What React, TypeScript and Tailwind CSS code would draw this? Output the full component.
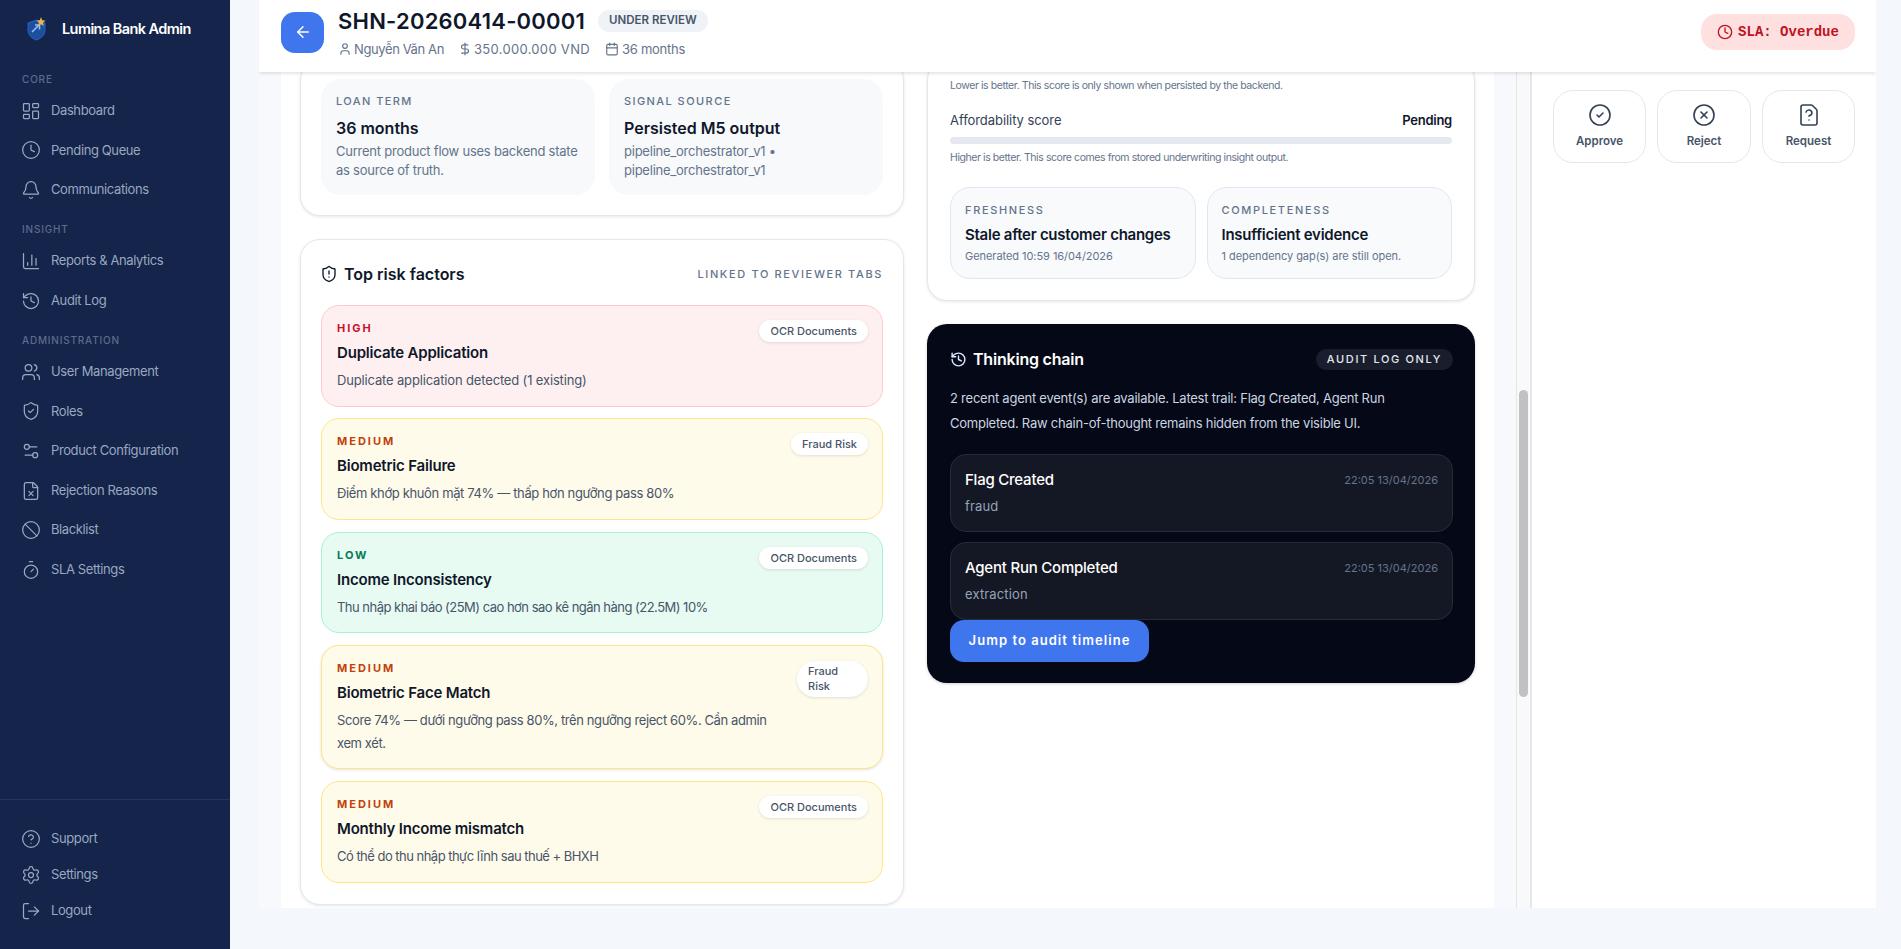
import {
  ArrowLeft, Ban, Bell, Calendar, ChartColumn, CircleCheck, CircleHelp, CircleX, Clock, DollarSign,
  FileQuestion, FileX, History, LayoutDashboard, LogOut, Settings, Settings2, ShieldAlert, ShieldCheck,
  Timer, User, Users,
} from "lucide-react";

const font = { fontFamily: "Inter, 'Noto Sans', sans-serif" };

const coreItems = [
  { label: "Dashboard", icon: LayoutDashboard },
  { label: "Pending Queue", icon: Clock },
  { label: "Communications", icon: Bell },
];
const insightItems = [
  { label: "Reports & Analytics", icon: ChartColumn },
  { label: "Audit Log", icon: History },
];
const adminItems = [
  { label: "User Management", icon: Users },
  { label: "Roles", icon: ShieldCheck },
  { label: "Product Configuration", icon: Settings2 },
  { label: "Rejection Reasons", icon: FileX },
  { label: "Blacklist", icon: Ban },
  { label: "SLA Settings", icon: Timer },
];
const footerItems = [
  { label: "Support", icon: CircleHelp },
  { label: "Settings", icon: Settings },
  { label: "Logout", icon: LogOut },
];

const riskStyles = {
  HIGH: "bg-[#fef0f0] border-[#fecaca]",
  MEDIUM: "bg-[#fffbea] border-[#fde68a]",
  LOW: "bg-[#e8fbf2] border-[#a7f3d0]",
};
const riskText = {
  HIGH: "text-[#c8102e]",
  MEDIUM: "text-[#c2410c]",
  LOW: "text-[#047857]",
};

type Risk = { level: "HIGH" | "MEDIUM" | "LOW"; title: string; desc: string; tab: string; track: string; narrow?: boolean };

const risks: Risk[] = [
  { level: "HIGH", title: "Duplicate Application", desc: "Duplicate application detected (1 existing)", tab: "OCR Documents", track: "tracking-[-0.012em]" },
  { level: "MEDIUM", title: "Biometric Failure", desc: "Điểm khớp khuôn mặt 74% — thấp hơn ngưỡng pass 80%", tab: "Fraud Risk", track: "tracking-[-0.028em]" },
  { level: "LOW", title: "Income Inconsistency", desc: "Thu nhập khai báo (25M) cao hơn sao kê ngân hàng (22.5M) 10%", tab: "OCR Documents", track: "tracking-[-0.04em]" },
  { level: "MEDIUM", title: "Biometric Face Match", desc: "Score 74% — dưới ngưỡng pass 80%, trên ngưỡng reject 60%. Cần admin xem xét.", tab: "Fraud Risk", track: "tracking-[-0.03em]", narrow: true },
  { level: "MEDIUM", title: "Monthly Income mismatch", desc: "Có thể do thu nhập thực lĩnh sau thuế + BHXH", tab: "OCR Documents", track: "tracking-[-0.04em]" },
];

function NavGroup({ title, items }: { title: string; items: typeof coreItems }) {
  return (
    <div>
      <p className="pl-[22px] text-[10px] leading-[14px] tracking-[0.08em] text-[#5d6c8e] font-medium">{title}</p>
      <div className="mt-[5px]">
        {items.map((item) => (
          <div key={item.label} className="h-[39.6px] flex items-center pl-[21px] gap-[10px] text-[#9aa8c0] text-[13px] tracking-[-0.03em]">
            <item.icon className="w-[20px] h-[20px]" strokeWidth={1.5} />
            <span>{item.label}</span>
          </div>
        ))}
      </div>
    </div>
  );
}

function Sidebar() {
  return (
    <aside className="w-[230px] shrink-0 h-full bg-[#14244a] flex flex-col">
      <div className="h-[58px] flex items-center pl-[27px] gap-[16px]">
        <svg width="19" height="24" viewBox="0 0 19 24">
          <path d="M9.5 3 L18 6 V13 C18 18 14 21.5 9.5 23 C5 21.5 1 18 1 13 V6 Z" fill="#1d4f9c" stroke="#2563c9" strokeWidth="1" />
          <path d="M5 15 L12 8 M8 8 h4.5 v4.5" stroke="#8fc1f5" strokeWidth="1.6" fill="none" />
          <path d="M14 0 L15.2 3.2 L18.5 3.5 L16 5.7 L16.8 9 L14 7.2 L11.2 9 L12 5.7 L9.5 3.5 L12.8 3.2 Z" fill="#e8b64c" />
        </svg>
        <span className="text-white text-[14.5px] font-semibold tracking-[-0.04em]">Lumina Bank Admin</span>
      </div>
      <div className="mt-[14px] flex flex-col gap-[12.5px]">
        <NavGroup title="CORE" items={coreItems} />
        <NavGroup title="INSIGHT" items={insightItems} />
        <NavGroup title="ADMINISTRATION" items={adminItems} />
      </div>
      <div className="mt-auto border-t border-[#24365f] pt-[21px] pb-[20px]">
        {footerItems.map((item) => (
          <div key={item.label} className="h-[36px] flex items-center pl-[21px] gap-[10px] text-[#9aa8c0] text-[13px] tracking-[-0.03em]">
            <item.icon className="w-[20px] h-[20px]" strokeWidth={1.5} />
            <span>{item.label}</span>
          </div>
        ))}
      </div>
    </aside>
  );
}

function Header() {
  return (
    <header className="relative z-10 h-[72px] shrink-0 bg-white shadow-[0_1px_4px_rgba(15,23,42,0.16)] flex items-center justify-between pl-[22px] pr-[21px] pb-[8px]">
      <div className="flex items-center gap-[14px]">
        <button className="w-[43px] h-[41px] rounded-[14px] bg-[#3f76ee] flex items-center justify-center text-white">
          <ArrowLeft className="w-[18px] h-[18px]" />
        </button>
        <div>
          <div className="flex items-center gap-[13px]">
            <h1 className="text-[22px] leading-[30px] font-semibold text-[#0f172a] tracking-[0.01em]">SHN-20260414-00001</h1>
            <span className="h-[22px] px-[11px] rounded-full bg-[#eff2f7] flex items-center text-[11.5px] font-semibold text-[#475569]">UNDER REVIEW</span>
          </div>
          <div className="mt-[3px] flex items-center text-[13px] text-[#64748b] leading-[20px]">
            <User className="w-[14px] h-[14px] mr-[2px]" />
            <span className="tracking-[-0.03em]">Nguyễn Văn An</span>
            <DollarSign className="w-[14px] h-[14px] ml-[14px] mr-[2px]" />
            <span className="tracking-[0.024em]">350.000.000 VND</span>
            <Calendar className="w-[14px] h-[14px] ml-[15px] mr-[3px]" />
            <span className="tracking-[-0.02em]">36 months</span>
          </div>
        </div>
      </div>
      <div className="h-[36px] w-[154px] rounded-[16px] bg-[#fde0df] flex items-center justify-center gap-[5px] text-[#c1121f] text-[14px] font-bold" style={{ fontFamily: "'Liberation Mono', monospace" }}>
        <Clock className="w-[16px] h-[16px]" />
        <span>SLA: Overdue</span>
      </div>
    </header>
  );
}

function MiniStat({ label, value, lines }: { label: string; value: string; lines: string[] }) {
  return (
    <div className="rounded-[20px] bg-[#f7f9fb] h-[116px] px-[15px] pt-[14px]">
      <p className="text-[11px] leading-[16px] tracking-[0.13em] font-medium text-[#64748b]">{label}</p>
      <p className="mt-[6px] text-[16px] leading-[26px] font-semibold text-[#0f172a]">{value}</p>
      <p className="mt-[1px] text-[13px] leading-[19px] text-[#64748b] tracking-[-0.018em]">
        {lines.map((l, i) => (
          <span key={i} className="block whitespace-nowrap">{l}</span>
        ))}
      </p>
    </div>
  );
}

function RiskRow({ level, title, desc, tab, track, narrow }: Risk) {
  return (
    <div className={`rounded-[18px] border pl-[15px] pr-[14px] py-[14px] flex items-start justify-between gap-[8px] ${riskStyles[level]} ${narrow ? "shadow-[0_1px_3px_rgba(15,23,42,0.12)]" : ""}`}>
      <div className="min-w-0 flex-1">
        <p className={`text-[11px] leading-[17px] font-bold tracking-[0.18em] ${riskText[level]}`}>{level}</p>
        <p className="mt-[4px] text-[15px] leading-[24px] font-semibold text-[#0f172a] tracking-[-0.013em]">{title}</p>
        <p className={`mt-[4px] text-[13px] leading-[22.75px] text-[#475569] ${track}`}>{desc}</p>
      </div>
      <span className={`shrink-0 bg-white rounded-[18px] shadow-[0_1px_3px_rgba(15,23,42,0.12)] text-[11px] font-medium text-[#475569] ${narrow ? "w-[71px] px-[11px] py-[3px] leading-[15px] mt-[1px]" : "px-[11px] h-[22px] leading-[22px]"}`}>
        {tab}
      </span>
    </div>
  );
}

function LeftColumn() {
  return (
    <div className="flex flex-col gap-[23px]">
      <section className="rounded-[20px] border border-[#e2e8f0] bg-white shadow-[0_1px_3px_rgba(15,23,42,0.1)] px-[20px] pt-[18px] pb-[20px] grid grid-cols-2 gap-[14px]">
        <MiniStat label="LOAN TERM" value="36 months" lines={["Current product flow uses backend state", "as source of truth."]} />
        <MiniStat label="SIGNAL SOURCE" value="Persisted M5 output" lines={["pipeline_orchestrator_v1 •", "pipeline_orchestrator_v1"]} />
      </section>
      <section className="rounded-[20px] border border-[#e2e8f0] bg-white shadow-[0_1px_3px_rgba(15,23,42,0.1)] px-[20px] pt-[20px] pb-[21px]">
        <div className="h-[28px] flex items-center justify-between">
          <div className="flex items-center gap-[6px] -ml-[1px]">
            <ShieldAlert className="w-[18px] h-[18px] text-[#0f172a]" strokeWidth={1.8} />
            <h2 className="text-[16px] font-semibold text-[#0f172a]">Top risk factors</h2>
          </div>
          <span className="text-[11px] font-medium tracking-[0.148em] text-[#64748b]">LINKED TO REVIEWER TABS</span>
        </div>
        <div className="mt-[17px] flex flex-col gap-[11.5px]">
          {risks.map((r) => (
            <RiskRow key={r.title} {...r} />
          ))}
        </div>
      </section>
    </div>
  );
}

function StatusBox({ label, value, note }: { label: string; value: string; note: string }) {
  return (
    <div className="h-[92px] rounded-[20px] border border-[#e2e8f0] bg-[#f8fafc] px-[14px] pt-[14px]">
      <p className="text-[11px] leading-[16px] tracking-[0.15em] font-medium text-[#64748b]">{label}</p>
      <p className="mt-[5px] text-[15px] leading-[24px] font-semibold text-[#0f172a] tracking-[-0.017em] whitespace-nowrap">{value}</p>
      <p className="mt-[1px] text-[11px] leading-[16px] text-[#64748b] tracking-[-0.005em]">{note}</p>
    </div>
  );
}

function EventRow({ title, note }: { title: string; note: string }) {
  return (
    <div className="h-[78px] rounded-[16px] border border-[#262b38] bg-[#141824] px-[14px] pt-[13px]">
      <div className="flex items-center justify-between">
        <span className="text-[15px] leading-[24px] font-medium text-white tracking-[-0.015em]">{title}</span>
        <span className="text-[11px] text-[#64748b]">22:05 13/04/2026</span>
      </div>
      <p className="mt-[4px] text-[13px] leading-[20px] text-[#94a3b8] tracking-[0.01em]">{note}</p>
    </div>
  );
}

function RightColumn() {
  return (
    <div className="flex flex-col gap-[23px]">
      <section className="rounded-[20px] border border-[#e2e8f0] bg-white shadow-[0_1px_3px_rgba(15,23,42,0.1)] px-[22px] pt-[17px] pb-[21px]">
        <p className="text-[10.5px] leading-[16px] text-[#64748b] tracking-[-0.04em]">Lower is better. This score is only shown when persisted by the backend.</p>
        <div className="mt-[16px] flex items-center justify-between text-[13px] leading-[20px]">
          <span className="text-[#334155] tracking-[-0.005em]">Affordability score</span>
          <span className="font-semibold text-[#0f172a] tracking-[-0.02em]">Pending</span>
        </div>
        <div className="mt-[7px] h-[7px] rounded-full bg-[#e5e9ef]" />
        <p className="mt-[6px] text-[10.5px] leading-[16px] text-[#64748b] tracking-[-0.04em]">Higher is better. This score comes from stored underwriting insight output.</p>
        <div className="mt-[21px] grid grid-cols-2 gap-[11px]">
          <StatusBox label="FRESHNESS" value="Stale after customer changes" note="Generated 10:59 16/04/2026" />
          <StatusBox label="COMPLETENESS" value="Insufficient evidence" note="1 dependency gap(s) are still open." />
        </div>
      </section>
      <section className="rounded-[20px] bg-[#050816] shadow-[0_1px_3px_rgba(15,23,42,0.2)] pl-[23px] pr-[22px] pt-[21px] pb-[21px]">
        <div className="h-[28px] flex items-center justify-between">
          <div className="flex items-center gap-[6px]">
            <History className="w-[17px] h-[17px] text-[#dbeafe]" />
            <h2 className="text-[16px] font-semibold text-white tracking-[-0.013em]">Thinking chain</h2>
          </div>
          <span className="h-[21px] px-[11px] rounded-full bg-[#1a1e2c] flex items-center text-[11px] font-medium tracking-[0.148em] text-[#e2e8f0]">AUDIT LOG ONLY</span>
        </div>
        <p className="mt-[13px] text-[13px] leading-[25px] text-[#cbd5e1] tracking-[-0.018em]">
          2 recent agent event(s) are available. Latest trail: Flag Created, Agent Run Completed. Raw chain-of-thought remains hidden from the visible UI.
        </p>
        <div className="mt-[18px] flex flex-col gap-[10px]">
          <EventRow title="Flag Created" note="fraud" />
          <EventRow title="Agent Run Completed" note="extraction" />
        </div>
        <button className="block w-[199px] h-[42px] rounded-[14px] bg-[#3f76ee] text-white text-[13px] font-semibold tracking-[0.08em]">
          Jump to audit timeline
        </button>
      </section>
    </div>
  );
}

function ActionPanel() {
  const actions = [
    { label: "Approve", icon: CircleCheck, w: "w-[93px]" },
    { label: "Reject", icon: CircleX, w: "w-[94px]" },
    { label: "Request", icon: FileQuestion, w: "w-[93px]" },
  ];
  return (
    <aside className="w-[346px] shrink-0 bg-white border-l-2 border-[#e2e8f0] pt-[18px] pl-[21px]">
      <div className="flex gap-[11px]">
        {actions.map((a) => (
          <button key={a.label} className={`${a.w} h-[73px] rounded-[20px] border border-[#e2e8f0] flex flex-col items-center pt-[12px] text-[#475569]`}>
            <a.icon className="w-[24px] h-[24px] text-[#334155]" strokeWidth={1.6} />
            <span className="mt-[6px] text-[11.5px] leading-[16px] font-semibold">{a.label}</span>
          </button>
        ))}
      </div>
    </aside>
  );
}

export default function App() {
  return (
    <div className="w-[1901px] h-[949px] overflow-hidden flex bg-[#f4f7fc]" style={font}>
      <Sidebar />
      <main className="flex-1 pl-[29px] pr-[25px]">
        <div className="h-[908px] flex flex-col overflow-hidden">
          <Header />
          <div className="flex-1 min-h-0 flex">
            <div className="flex-1 min-w-0 bg-[#f7f9fc] pl-[22px] pr-[22px]">
              <div className="h-[calc(100%+12px)] bg-white -mt-[12px] pl-[19px] pr-[19px] grid grid-cols-[604px_548px] gap-[23px] items-start">
                <LeftColumn />
                <RightColumn />
              </div>
            </div>
            {/* scrollbar track */}
            <div className="w-[14px] shrink-0 bg-[#f9f9f9] border-l border-[#e5e5e5] relative">
              <div className="absolute left-[2px] top-[318px] w-[9px] h-[307px] rounded-full bg-[#c1c1c1]" />
            </div>
            <ActionPanel />
          </div>
        </div>
      </main>
    </div>
  );
}
